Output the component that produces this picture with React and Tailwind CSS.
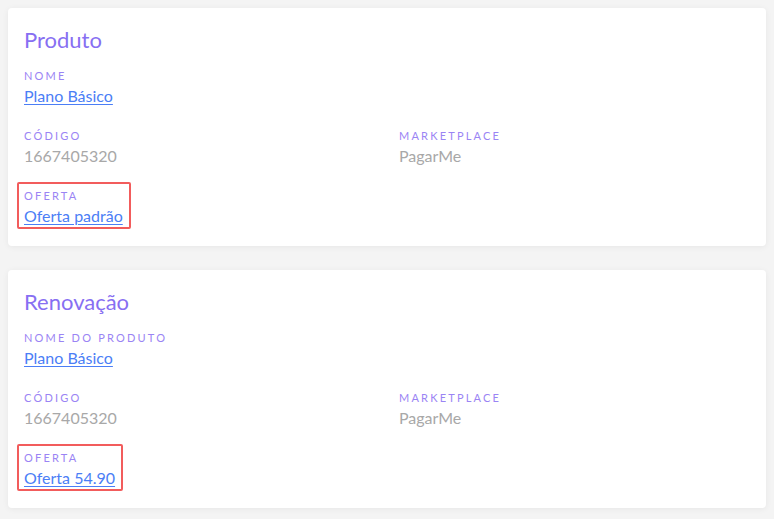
const cards = [
  {
    title: "Produto",
    fields: [
      { label: "Nome", value: "Plano Básico", link: true, full: true },
      { label: "Código", value: "1667405320" },
      { label: "Marketplace", value: "PagarMe" },
      { label: "Oferta", value: "Oferta padrão", link: true, full: true, marked: true },
    ],
  },
  {
    title: "Renovação",
    fields: [
      { label: "Nome do produto", value: "Plano Básico", link: true, full: true },
      { label: "Código", value: "1667405320" },
      { label: "Marketplace", value: "PagarMe" },
      { label: "Oferta", value: "Oferta 54.90", link: true, full: true, marked: true },
    ],
  },
];

function Field({ field }) {
  return (
    <div className={field.full ? "col-span-2" : ""}>
      <div className="relative inline-block">
        {field.marked && (
          <span className="absolute -left-[7px] -top-[6px] -right-[8px] -bottom-[1px] border-2 border-[#f25c5c] rounded-[2px]" />
        )}
        <p className="text-[11px] leading-4 uppercase tracking-[0.2em] text-[#9a84f4]">
          {field.label}
        </p>
        {field.link ? (
          <a href="#" className="block text-[16px] leading-6 text-[#4b7ef6] underline underline-offset-2">
            {field.value}
          </a>
        ) : (
          <p className="text-[16px] leading-6 text-[#a8a8a8]">{field.value}</p>
        )}
      </div>
    </div>
  );
}

export default function App() {
  return (
    <div
      className="min-h-screen bg-[#f4f4f4] p-2 flex flex-col gap-6"
      style={{ fontFamily: "Lato, 'Noto Sans', sans-serif" }}
    >
      {cards.map((card) => (
        <div
          key={card.title}
          className="bg-white rounded-[4px] shadow-[0_1px_6px_rgba(0,0,0,0.06)] px-4 pt-4 pb-[18px]"
        >
          <h2 className="text-[22px] leading-8 text-[#876ff2]">{card.title}</h2>
          <div className="mt-3 grid grid-cols-2 gap-x-6 gap-y-5">
            {card.fields.map((f) => (
              <Field key={f.label} field={f} />
            ))}
          </div>
        </div>
      ))}
    </div>
  );
}
